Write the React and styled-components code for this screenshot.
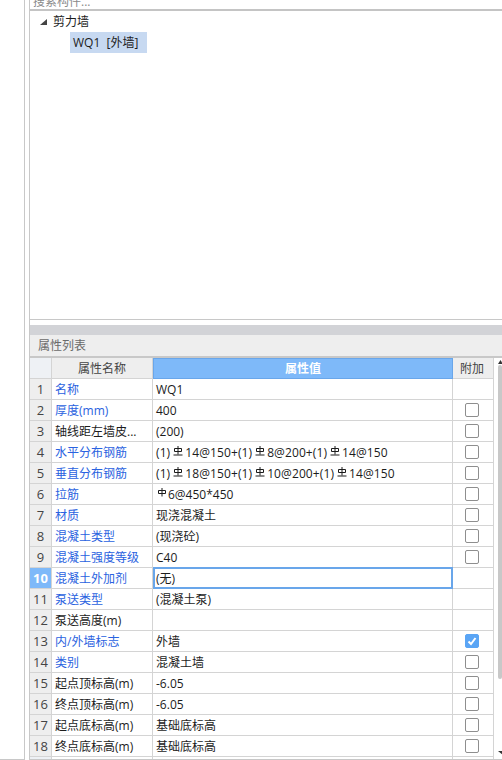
import React from "react";
import styled, { createGlobalStyle } from "styled-components";

const Global = createGlobalStyle`
  html, body { margin: 0; padding: 0; background: #fff; overflow: hidden; }
  body { font-family: "Open Sans", "Noto Sans CJK SC", sans-serif; font-size: 12px; color: #1c1c1c; }
`;

const Page = styled.div`
  width: 502px; height: 760px; display: flex; overflow: hidden; background: #fff;
`;
const Rail = styled.div`
  width: 25px; flex: none; box-sizing: border-box; border-right: 1px solid #c8c8c8; border-bottom: 1px solid #c8c8c8; margin-right: 4px;
`;
const Main = styled.div`
  flex: 1; min-width: 0; display: flex; flex-direction: column; box-sizing: border-box; height: 760px;
  border-left: 1px solid #c8c8c8; border-bottom: 1px solid #c8c8c8;
`;
const Search = styled.div`
  height: 9px; overflow: hidden; border-bottom: 2px solid #c4c4c4; padding-left: 3px; color: #8a8a8a;
  & > span { display: block; margin-top: -6px; line-height: 16px; }
`;
const Tree = styled.div`
  height: 309px; box-sizing: border-box; border-bottom: 1px solid #c8c8c8;
`;
const TreeRow = styled.div`
  height: 21px; display: flex; align-items: center; padding-left: 10px; gap: 6px; line-height: 21px;
`;
const TreeLeaf = styled.div`
  margin-left: 40px; width: 77px; height: 21px; background: #c7d9f1; line-height: 22px; padding-left: 3px; box-sizing: border-box; white-space: pre;
`;
const Gutter = styled.div`height: 5px; background: #fff;`;
const Splitter = styled.div`height: 10px; background: #d2d3d7;`;
const PanelTitle = styled.div`
  height: 21px; background: #eeeeee; border-bottom: 2px solid #c8c8c8; color: #6a6a6a; padding-left: 8px; line-height: 22px;
`;
const Body = styled.div`display: flex; flex: 1; min-height: 0; overflow: hidden;`;
const Table = styled.div`
  width: 464px; flex: none; display: grid; grid-template-columns: 22px 101px 300px 41px; grid-auto-rows: 21px; overflow: hidden;
`;
const Corner = styled.div`background: #eef1f5; border-right: 1px solid #d4d4d4; border-bottom: 1px solid #d4d4d4;`;
const HeadCell = styled.div`
  background: #eeeeee; border-right: 1px solid #d4d4d4; border-bottom: 1px solid #d4d4d4; color: #444; text-align: center; line-height: 21px; padding-right: ${p => p.$pad || 0}px;
`;
const HeadActive = styled(HeadCell)`
  background: #7eb9f9; color: #fff; font-weight: 700; border: 1px solid #69a6ea; line-height: 19px;
`;
const Index = styled.div`
  background: ${p => (p.$active ? "#7eb9f9" : "#eeeeee")};
  color: ${p => (p.$active ? "#fff" : "#444")};
  font-weight: ${p => (p.$active ? 700 : 400)};
  border-right: 1px solid #d4d4d4; border-bottom: 1px solid #d4d4d4; text-align: center; line-height: 21px; font-size: 13px;
`;
const Name = styled.div`
  color: ${p => (p.$blue ? "#2a62e0" : "#1c1c1c")};
  border-right: 1px solid #d4d4d4; border-bottom: 1px solid #d4d4d4; padding-left: 3px; line-height: 22px; white-space: nowrap; overflow: hidden;
`;
const Value = styled.div`
  border-right: 1px solid #d4d4d4; border-bottom: 1px solid #d4d4d4; padding-left: 3px; line-height: 22px; white-space: nowrap; overflow: hidden;
  ${p => p.$focus && "border: 2px solid #69a6ea; padding-left: 1px; line-height: 19px; margin-top: -1px; height: 22px; box-sizing: border-box;"}
`;
const Extra = styled.div`
  border-right: 1px solid #d4d4d4; border-bottom: 1px solid #d4d4d4; display: flex; align-items: center; justify-content: center; padding-right: 2px;
`;
const Check = styled.span`
  width: 14px; height: 14px; box-sizing: border-box; border-radius: 2px; display: block;
  border: 1px solid ${p => (p.$on ? "#5aa5f5" : "#8e8e8e")}; background: ${p => (p.$on ? "#5aa5f5" : "#fff")};
  & > svg { display: block; }
`;
const Bar = styled.div`width: 8px; flex: none; position: relative; background: #fff;`;
const Thumb = styled.div`
  width: 4px; margin-left: 4px; height: 314px; margin-top: 7px; background: #c8c8c8; border-radius: 3px;
`;
const RebarText = styled.span`letter-spacing: 0.1px;`;
const Rebar = styled.svg`
  width: 10px; height: 10px; display: inline-block; vertical-align: 1px; margin: ${p => (p.$plain ? "0 1px 0 1px" : "0 2px 0 3px")};
`;
const Arrow = styled.svg`display: block; flex: none;`;
const ScrollArrow = styled.svg`position: absolute; left: 4px; display: block; ${p => p.$bottom ? "bottom: 4px;" : "top: 2px;"}`;

const R = ({ plain }) => (
  <Rebar $plain={plain} viewBox="0 0 10 10" fill="none" stroke="#1c1c1c" strokeWidth="1">
    <path d="M1.5 2.5v3h7v-3z" />
    <path d="M5 0v8.5" />
    {!plain && <path d="M.5 9h9" />}
  </Rebar>
);

const Bars = (a, b, c, d) => (
  <RebarText>(1)<R />{a}@{b}+(1)<R />{c}@200+(1)<R />{d}@150</RebarText>
);

const rows = [
  ["名称", 1, "WQ1", null],
  ["厚度(mm)", 1, "400", false],
  ["轴线距左墙皮...", 0, "(200)", false],
  ["水平分布钢筋", 1, Bars(14, 150, 8, 14), false],
  ["垂直分布钢筋", 1, Bars(18, 150, 10, 14), false],
  ["拉筋", 1, <><R plain />6@450*450</>, false],
  ["材质", 1, "现浇混凝土", false],
  ["混凝土类型", 1, "(现浇砼)", false],
  ["混凝土强度等级", 1, "C40", false],
  ["混凝土外加剂", 1, "(无)", null],
  ["泵送类型", 1, "(混凝土泵)", null],
  ["泵送高度(m)", 0, "", null],
  ["内/外墙标志", 1, "外墙", true],
  ["类别", 1, "混凝土墙", false],
  ["起点顶标高(m)", 0, "-6.05", false],
  ["终点顶标高(m)", 0, "-6.05", false],
  ["起点底标高(m)", 0, "基础底标高", false],
  ["终点底标高(m)", 0, "基础底标高", false],
];

export default function App() {
  return (
    <Page>
      <Global />
      <Rail />
      <Main>
        <Search><span>搜索构件...</span></Search>
        <Tree>
          <TreeRow>
            <Arrow width="7" height="6" viewBox="0 0 7 6"><path d="M7 0v6H0z" fill="#444" /></Arrow>
            <span>剪力墙</span>
          </TreeRow>
          <TreeLeaf>{"WQ1  [外墙]"}</TreeLeaf>
        </Tree>
        <Gutter />
        <Splitter />
        <PanelTitle>属性列表</PanelTitle>
        <Body>
          <Table>
            <Corner />
            <HeadCell>属性名称</HeadCell>
            <HeadActive>属性值</HeadActive>
            <HeadCell $pad={2}>附加</HeadCell>
            {rows.map(([n, blue, v, c], i) => (
              <React.Fragment key={i}>
                <Index $active={i === 9}>{i + 1}</Index>
                <Name $blue={!!blue}>{n}</Name>
                <Value $focus={i === 9}>{v}</Value>
                <Extra>
                  {c !== null && (
                    <Check $on={c}>
                      {c && (
                        <svg width="12" height="12" viewBox="0 0 12 12" fill="none" stroke="#fff" strokeWidth="2">
                          <path d="M2.5 6.5 5 9l4.5-6" />
                        </svg>
                      )}
                    </Check>
                  )}
                </Extra>
              </React.Fragment>
            ))}
            <Corner /><Name /><Value /><Extra />
          </Table>
          <Bar>
            <ScrollArrow width="5" height="4" viewBox="0 0 5 4"><path d="M2.5 0 5 4H0z" fill="#333" /></ScrollArrow>
            <Thumb />
            <ScrollArrow $bottom width="5" height="4" viewBox="0 0 5 4"><path d="M0 0h5v4z" fill="#333" /></ScrollArrow>
          </Bar>
        </Body>
      </Main>
    </Page>
  );
}
